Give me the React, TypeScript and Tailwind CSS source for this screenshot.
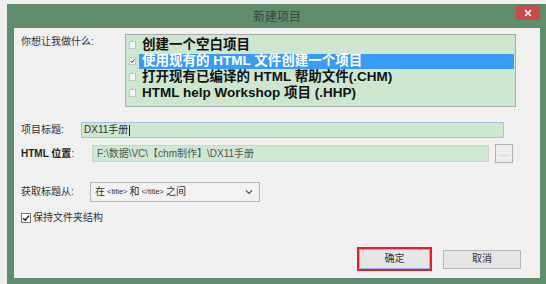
import React from "react";

const Check = ({ size = 8, color = "#111" }: { size?: number; color?: string }) => (
  <svg width={size} height={size} viewBox="0 0 10 10">
    <path d="M1.5 5.2 L4 7.8 L8.8 2" fill="none" stroke={color} strokeWidth="1.8" />
  </svg>
);

function ListRow({ text, checked, selected }: { text: string; checked?: boolean; selected?: boolean }) {
  return (
    <div className="flex items-center h-[16px]">
      <div className="ml-[3px] w-[7px] h-[8px] bg-[#f4f4f4] border border-[#c4c4c4] flex items-center justify-center shrink-0">
        {checked ? <Check size={8} /> : null}
      </div>
      <div
        className={
          selected
            ? "ml-[3px] mr-[1px] flex-1 h-[15px] flex items-center pl-[3px] bg-[#3a9bf4] text-white"
            : "ml-[3px] mr-[1px] flex-1 h-[15px] flex items-center pl-[3px] text-[#111]"
        }
      >
        <span className="text-[13.5px] font-bold leading-none whitespace-nowrap">{text}</span>
      </div>
    </div>
  );
}

export default function App() {
  return (
    <div className="w-[546px] h-[284px] bg-[#efefef] pt-[4px] pl-[7px] flex font-['Liberation_Sans','Noto_Sans_CJK_SC',sans-serif] text-[#333]">
      <div className="flex-1 flex flex-col bg-[#5f8d6b] pl-[7px] pr-[6px] pb-[6px]">
        <div className="h-[24px] grid grid-cols-[1fr_auto_1fr] items-start">
          <div />
          <div className="self-center text-[12px] leading-none text-[#3a4a3e] pt-[1px]">新建项目</div>
          <div className="justify-self-end mt-[1px] w-[24px] h-[15px] bg-[#c94a4d] flex items-center justify-center">
            <svg width="8" height="8" viewBox="0 0 8 8">
              <path d="M1 1 L7 7 M7 1 L1 7" stroke="#fff" strokeWidth="1.6" />
            </svg>
          </div>
        </div>
        <div className="flex-1 bg-[#f0f0f0] flex flex-col pl-[7px] pt-[6px]">
          <div className="flex">
            <div className="w-[104px] pt-[3px] text-[10px] leading-none whitespace-nowrap">你想让我做什么:</div>
            <div className="w-[391px] h-[73px] border border-[#a9a9a9] bg-[#cde7cf] pt-[2px] flex flex-col">
              <ListRow text="创建一个空白项目" />
              <ListRow text="使用现有的 HTML 文件创建一个项目" checked selected />
              <ListRow text="打开现有已编译的 HTML 帮助文件(.CHM)" />
              <ListRow text="HTML help Workshop 项目 (.HHP)" />
            </div>
          </div>

          <div className="flex items-center mt-[15px] h-[16px]">
            <div className="w-[60px] text-[10px] leading-none whitespace-nowrap">项目标题:</div>
            <div className="w-[423px] h-[16px] border border-[#a3c3e6] bg-[#cce8ce] flex items-center pl-[2px] text-[10px] leading-none text-[#333]">
              DX11手册
              <span className="ml-[1px] w-px h-[11px] bg-[#222]" />
            </div>
          </div>

          <div className="flex items-center mt-[6px] h-[19px]">
            <div className="w-[71px] text-[10px] leading-none whitespace-nowrap">
              <span className="font-bold text-[#222]">HTML 位置</span>:
            </div>
            <div className="w-[397px] h-[17px] border border-[#c8d8c8] bg-[#cfe8d1] flex items-center pl-[4px] text-[10px] leading-none text-[#555] whitespace-nowrap">
              {"F:\\数据\\VC\\【chm制作】\\DX11手册"}
            </div>
            <div className="ml-[6px] w-[18px] h-[19px] border border-[#b0b0b0] bg-[#ececec] flex items-end justify-center pb-[5px] text-[7px] leading-none text-[#888]">
              ...
            </div>
          </div>

          <div className="flex items-center mt-[19px] h-[20px]">
            <div className="w-[69px] text-[10px] leading-none whitespace-nowrap">获取标题从:</div>
            <div className="w-[170px] h-[20px] border border-[#b3b3b3] bg-[#f2f2f2] flex items-center pl-[4px] pr-[6px] text-[10px] leading-none text-[#333] whitespace-nowrap">
              <span>在</span>
              <span className="text-[7.5px] ml-[2px]">{"<title>"}</span>
              <span className="ml-[2px]">和</span>
              <span className="text-[7.5px] ml-[2px]">{"</title>"}</span>
              <span className="ml-[2px]">之间</span>
              <span className="ml-auto">
                <svg width="8" height="6" viewBox="0 0 8 6">
                  <path d="M1 1.5 L4 4.5 L7 1.5" fill="none" stroke="#555" strokeWidth="1.2" />
                </svg>
              </span>
            </div>
          </div>

          <div className="flex items-center mt-[10px] h-[11px]">
            <div className="w-[10px] h-[10px] border border-[#777] bg-white flex items-center justify-center">
              <Check size={8} color="#222" />
            </div>
            <div className="ml-[2px] text-[10px] leading-none whitespace-nowrap">保持文件夹结构</div>
          </div>

          <div className="mt-auto flex items-center justify-end pr-[19px] pb-[7px] gap-[11px]">
            <div className="w-[75px] h-[24px] border-2 border-[#e01f2b] flex">
              <div className="flex-1 border border-[#86b8e8] bg-[#e6e6e6] flex items-center justify-center text-[10px] leading-none text-[#333]">
                确定
              </div>
            </div>
            <div className="w-[78px] h-[19px] border border-[#b5b5b5] bg-[#e5e5e5] flex items-center justify-center text-[10px] leading-none text-[#333]">
              取消
            </div>
          </div>
        </div>
      </div>
    </div>
  );
}
